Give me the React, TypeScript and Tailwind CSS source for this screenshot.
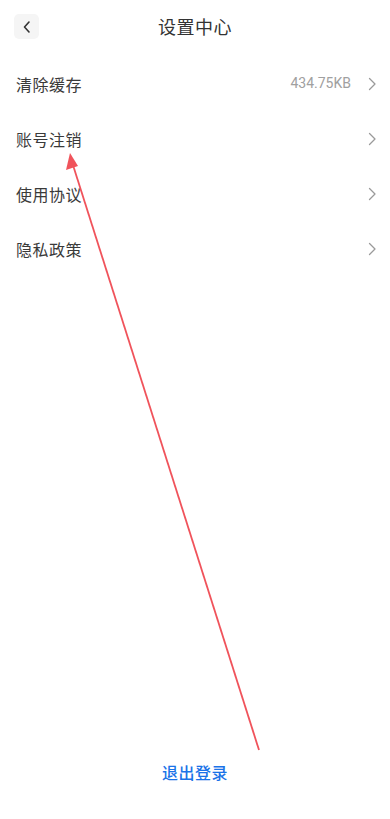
import React from "react";

const Chevron = () => (
  <svg width="9" height="14" viewBox="0 0 9 14" fill="none">
    <path d="M1.5 1.5 L7 7 L1.5 12.5" stroke="#9a9a9a" strokeWidth="1.3" strokeLinecap="round" strokeLinejoin="round" />
  </svg>
);

const rows = [
  { label: "清除缓存", value: "434.75KB" },
  { label: "账号注销" },
  { label: "使用协议" },
  { label: "隐私政策" },
];

export default function App() {
  return (
    <div
      className="relative w-[390px] h-[819px] bg-white flex flex-col overflow-hidden"
      style={{ fontFamily: '"Noto Sans CJK SC", "Noto Sans", sans-serif' }}
    >
      <div className="relative h-[53px] flex items-center justify-center shrink-0">
        <div className="absolute left-[14px] top-[14px] w-[25px] h-[25px] rounded-[5px] bg-[#f5f5f5] flex items-center justify-center">
          <svg width="10" height="14" viewBox="0 0 10 14" fill="none">
            <path d="M7 2 L2.5 7 L7 12" stroke="#333" strokeWidth="1.6" strokeLinecap="round" strokeLinejoin="round" />
          </svg>
        </div>
        <span className="text-[18px] text-[#333] tracking-[0.5px]">设置中心</span>
      </div>
      <div className="flex flex-col pt-[3px]">
        {rows.map((r) => (
          <div key={r.label} className="h-[55px] flex items-center pl-[16px] pr-[13px]">
            <span className="text-[16px] text-[#3a3a3a] flex-1 tracking-[0.5px]">{r.label}</span>
            {r.value && (
              <span className="text-[14px] text-[#a0a0a0] mr-[17px]" style={{ fontFamily: '"Roboto", "Noto Sans", sans-serif' }}>
                {r.value}
              </span>
            )}
            <Chevron />
          </div>
        ))}
      </div>
      <div className="flex-1" />
      <div className="h-[59px] flex items-start justify-center">
        <span className="text-[16px] font-medium text-[#1a73e8] tracking-[0.5px]">退出登录</span>
      </div>
      <svg className="absolute inset-0 pointer-events-none" width="390" height="819" viewBox="0 0 390 819">
        <line x1="259" y1="750" x2="72" y2="162" stroke="#f0535b" strokeWidth="1.8" />
        <polygon points="70,153 66,170 78,166" fill="#f0535b" />
      </svg>
    </div>
  );
}
